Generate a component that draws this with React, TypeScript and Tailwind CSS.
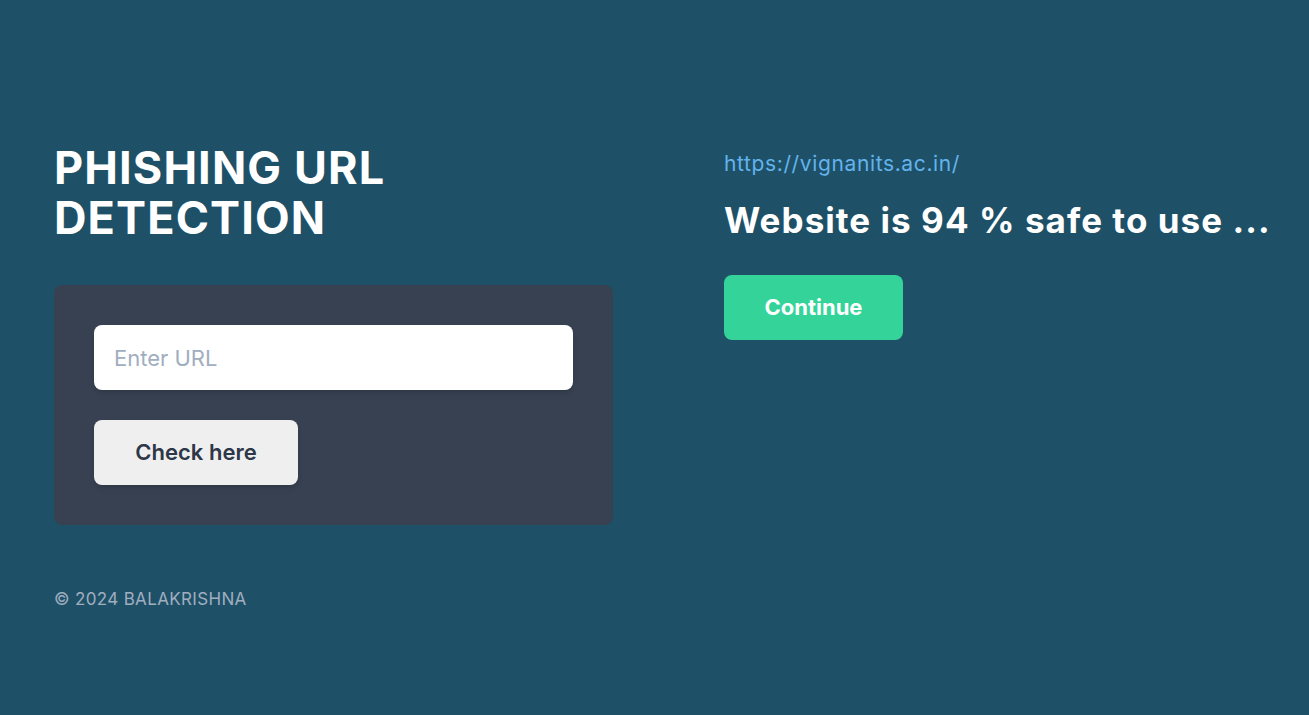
export default function App() {
  return (
    <div className="min-h-screen w-full bg-[#1e5167] font-['Inter',sans-serif] text-white">
      <div className="flex px-[54px] pt-[138px]">
        {/* Left: form */}
        <div className="w-[559px] shrink-0">
          <h1 className="mt-[5px] text-[45px] font-bold leading-[50px] tracking-[0.025em]">
            PHISHING URL
            <br />
            DETECTION
          </h1>

          <div className="mt-[42px] rounded-lg bg-[#374151] p-10">
            <input
              type="text"
              placeholder="Enter URL"
              className="h-[65px] w-full rounded-lg bg-white px-5 text-[22px] text-gray-800 shadow-md outline-none placeholder:text-[#a0aec0]"
            />
            <button className="mt-[30px] h-[65px] w-[204px] rounded-lg bg-[#efefef] text-[22px] font-semibold text-[#2d3748] shadow-md">
              Check here
            </button>
          </div>

          <p className="mt-[62px] text-[17px] leading-6 tracking-[0.02em] text-[#a0aec0]">© 2024 BALAKRISHNA</p>
        </div>

        {/* Right: result */}
        <div className="ml-[111px] shrink-0 pt-[12px]">
          <a href="#" className="block text-[21px] leading-7 tracking-[0.03em] text-[#63b3ed]">
            https://vignanits.ac.in/
          </a>
          <h2 className="mt-[22px] whitespace-nowrap text-[35px] font-bold leading-[40px] tracking-[0.03em]">
            Website is 94 % safe to use ...
          </h2>
          <button className="mt-[35px] h-[65px] w-[179px] rounded-lg bg-[#34d399] text-[22px] font-bold text-white">
            Continue
          </button>
        </div>
      </div>
    </div>
  );
}
